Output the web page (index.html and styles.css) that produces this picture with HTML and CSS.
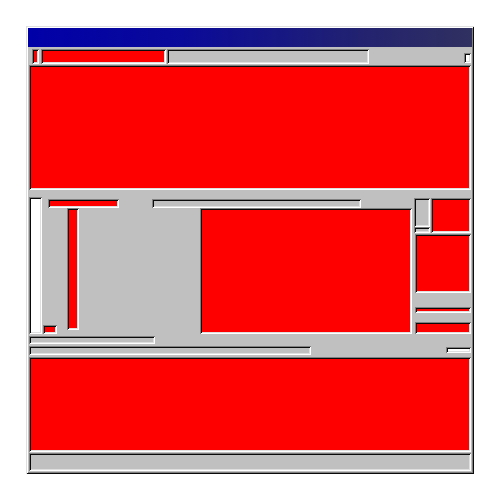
FILE: index.html
```html
<!DOCTYPE html>
<html>
<head>
<meta charset="utf-8">
<link rel="stylesheet" href="styles.css">
</head>
<body>
<div class="win">
  <div class="title"></div>
  <div class="content">
    <div class="toolbar">
      <div class="inset red tb-small"></div>
      <div class="inset red tb-red"></div>
      <div class="inset gray tb-gray"></div>
      <div class="tb-spacer"></div>
      <div class="inset white tb-right"></div>
    </div>
    <div class="inset red main"></div>
    <div class="mid">
      <div class="mid-grid">
        <div class="inset white g-white"></div>
        <div class="inset red g-redsmall"></div>
        <div class="inset red g-redh"></div>
        <div class="inset red g-redv"></div>
        <div class="inset gray g-graybar"></div>
        <div class="inset red g-bigred"></div>
        <div class="inset gray g-rbox"></div>
        <div class="inset gray g-rboxlow"></div>
        <div class="inset red g-rtop"></div>
        <div class="inset red g-rmid"></div>
        <div class="inset red g-rthin"></div>
        <div class="inset red g-rbot"></div>
        <div class="inset gray g-bar1"></div>
        <div class="inset gray g-bar2"></div>
        <div class="inset white g-wbar"></div>
      </div>
    </div>
    <div class="inset red bottom"></div>
    <div class="inset gray status"></div>
  </div>
</div>
</body>
</html>
```

FILE: styles.css
```css
html, body {
  margin: 0;
  padding: 0;
  background: #ffffff;
}

.win {
  margin: 26px 0 0 26px;
  width: 448px;
  height: 448px;
  box-sizing: border-box;
  padding: 2px;
  background: #c0c0c0;
  box-shadow: inset 1px 1px #dfdfdf, inset -1px -1px #0a0a0a,
              inset 2px 2px #ffffff, inset -2px -2px #808080;
  display: flex;
  flex-direction: column;
}

.title {
  height: 19px;
  flex: none;
  background: linear-gradient(to right, #0000a8 0%, #0a0a9a 35%, #222270 75%, #303060 100%);
}

.content {
  flex: 1;
  padding: 0 1px 1px 1px;
  display: flex;
  flex-direction: column;
}

.inset {
  box-sizing: border-box;
  box-shadow: inset 1px 1px #808080, inset -1px -1px #ffffff,
              inset 2px 2px #0a0a0a, inset -2px -2px #dfdfdf;
}
.red { background: #ff0000; }
.gray { background: #c0c0c0; }
.white { background: #ffffff; }

.toolbar {
  height: 18px;
  flex: none;
  box-sizing: border-box;
  padding-top: 2px;
  display: flex;
  align-items: flex-start;
}
.tb-small { width: 7px; height: 15px; margin-left: 3px; }
.tb-red { width: 125px; height: 15px; margin-left: 2px; }
.tb-gray { width: 202px; height: 15px; margin-left: 1px; }
.tb-spacer { flex: 1; }
.tb-right { width: 7px; height: 10px; margin-top: 4px; }

.main { height: 125px; flex: none; }

.mid {
  height: 167px;
  flex: none;
  box-sizing: border-box;
  padding-top: 7px;
}
.mid-grid {
  display: grid;
  grid-template-columns: 13px 1px 5px 9px 10px 12px 40px 33px 3px 45px 111px 50px 51px 2px 1px 15px 1px 15px 25px;
  grid-template-rows: 1px 1px 9px 19px 6px 1px 59px 14px 6px 9px 3px 5px 4px 2px 8px 2px 1px 6px 2px;
}
.g-white { grid-column: 1 / 2; grid-row: 1 / 14; }
.g-redsmall { grid-column: 3 / 5; grid-row: 12 / 14; }
.g-redh { grid-column: 4 / 8; grid-row: 3 / 4; }
.g-redv { grid-column: 6 / 7; grid-row: 4 / 13; }
.g-graybar { grid-column: 9 / 13; grid-row: 3 / 4; }
.g-bigred { grid-column: 11 / 14; grid-row: 4 / 14; }
.g-rbox { grid-column: 15 / 17; grid-row: 2 / 5; }
.g-rboxlow { grid-column: 15 / 17; grid-row: 5 / 6; }
.g-rtop { grid-column: 18 / 20; grid-row: 2 / 6; }
.g-rmid { grid-column: 16 / 20; grid-row: 7 / 8; }
.g-rthin { grid-column: 16 / 20; grid-row: 9 / 10; }
.g-rbot { grid-column: 16 / 20; grid-row: 11 / 14; }
.g-bar1 { grid-column: 1 / 10; grid-row: 15 / 16; }
.g-bar2 { grid-column: 1 / 12; grid-row: 17 / 20; }
.g-wbar { grid-column: 19 / 20; grid-row: 18 / 19; }

.bottom { height: 95px; flex: none; }
.status { height: 18px; flex: none; margin-top: 1px; }
```
